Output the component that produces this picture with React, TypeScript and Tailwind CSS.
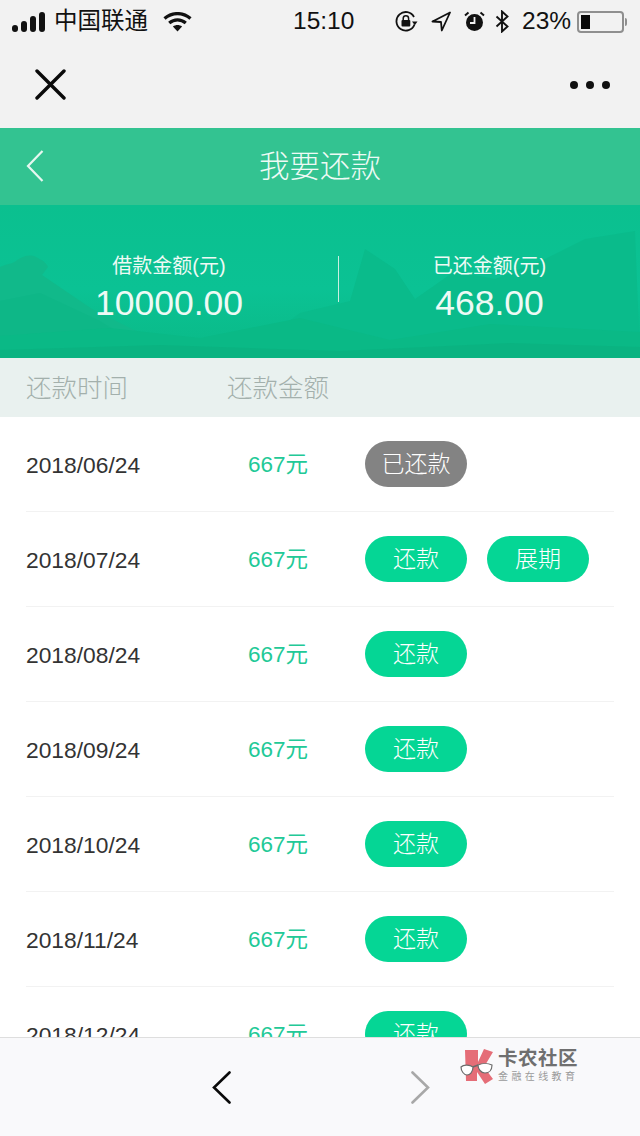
import React from 'react';

const FONT = "font-['Liberation_Sans','Noto_Sans_CJK_SC',sans-serif]";

interface Repayment {
    date: string;
    paid?: boolean;
    extend?: boolean;
}

const rows: Repayment[] = [
    { date: '2018/06/24', paid: true },
    { date: '2018/07/24', extend: true },
    { date: '2018/08/24' },
    { date: '2018/09/24' },
    { date: '2018/10/24' },
    { date: '2018/11/24' },
    { date: '2018/12/24' },
];

const PillButton: React.FC<{ label: string; gray?: boolean }> = ({ label, gray }) => (
    <div
        className={`flex h-[46px] w-[102px] items-center justify-center rounded-full pt-[1px] text-[23px] font-light text-white ${
            gray ? 'bg-[#838383]' : 'bg-[#05d695]'
        }`}
    >
        {label}
    </div>
);

const StatusBar: React.FC = () => (
    <div className="flex h-[42px] items-center whitespace-nowrap pt-[1px] text-[#111]">
        {/* signal */}
        <svg className="ml-[12px]" width="33" height="20" viewBox="0 0 33 20" fill="#111">
            <rect x="0" y="13" width="6" height="7" rx="3" />
            <rect x="9" y="9" width="6" height="11" rx="3" />
            <rect x="18" y="4" width="6" height="16" rx="3" />
            <rect x="27" y="0" width="6" height="20" rx="3" />
        </svg>
        <span className="ml-[9px] w-[95px] text-[23.500px] leading-none">中国联通</span>
        {/* wifi */}
        <svg className="ml-[14px]" width="29" height="20" viewBox="0 0 29 20" fill="none" stroke="#111" strokeWidth="3.2">
            <path d="M1.5 6.500c7.500-6.600 18.500-6.600 26 0" />
            <path d="M6.200 11c5-4.300 11.600-4.300 16.600 0" />
            <path d="M14.500 19.500l-4.600-5c2.800-2 6.400-2 9.200 0z" fill="#111" stroke="none" />
        </svg>
        <span className="ml-[101px] w-[61px] text-[24.500px] font-medium leading-none">15:10</span>
        {/* rotation lock */}
        <svg className="ml-[41px]" width="23" height="22" viewBox="0 0 23 22" fill="none" stroke="#111" strokeWidth="1.800">
            <path d="M19.500 13.500A9.300 9.300 0 1 1 19 6" />
            <path d="M17 10.500h5.500l-2.700 3.700z" fill="#111" stroke="none" />
            <path d="M8.200 9V7.400a2.700 2.700 0 0 1 5.400 0V9" strokeWidth="1.500" />
            <rect x="6.500" y="9" width="8.800" height="6.500" rx="1" fill="#111" stroke="none" />
        </svg>
        {/* location */}
        <svg className="ml-[13px]" width="20" height="21" viewBox="0 0 20 21" fill="none" stroke="#111" strokeWidth="1.800" strokeLinejoin="round">
            <path d="M19 1.500L1.500 10.500l8.500 .5 .8 8.500z" />
        </svg>
        {/* alarm */}
        <svg className="ml-[13px]" width="21" height="21" viewBox="0 0 21 21">
            <circle cx="10.500" cy="11.500" r="8.500" fill="#111" />
            <path d="M10.500 6v6H6" fill="none" stroke="#f2f2f2" strokeWidth="1.800" />
            <path d="M1 4.500L4.500 1.500M20 4.500L16.500 1.500" stroke="#111" strokeWidth="2" />
        </svg>
        {/* bluetooth */}
        <svg className="ml-[10px]" width="15" height="23" viewBox="0 0 15 23" fill="none" stroke="#111" strokeWidth="1.900">
            <path d="M1.500 6.500l11 10-5.500 5V1.500l5.500 5-11 10" />
        </svg>
        <span className="ml-[12px] w-[49px] text-[24.500px] leading-none">23%</span>
        {/* battery */}
        <div className="ml-[6px] flex h-[22px] w-[47px] items-center rounded-[4px] border-2 border-[#8f8f8f] px-[2px]">
            <div className="h-[14px] w-[9px] bg-[#0a0a0a]" />
        </div>
        <div className="ml-[1px] h-[8px] w-[2px] rounded-r-full bg-[#8f8f8f]" />
    </div>
);

const Mountains: React.FC = () => (
    <svg className="absolute inset-0 h-full w-full" viewBox="0 0 640 153" preserveAspectRatio="none">
        <path d="M0 62c6-3 12-3 16-6s12-8 20-4 10 6 12 10l-6 8 50 34 40 20 70 29H0z" fill="#11b98a" />
        <path d="M0 96l40-8 60 28 60 37H0z" fill="#0eb585" opacity=".6" />
        <path d="M240 153l60-45 50-12 15-52 30 20 20 30 40-28 40 8 50-20 40-20 50-8 5 127z" fill="#0abb8b" />
        <path d="M0 153v-22l110-8 90 10 100-20 90 22 100-16 150 8v26z" fill="#0ab986" />
        <path d="M0 153v-8l160-5 180 6 170-8 130 4v11z" fill="#0ab07f" opacity=".7" />
    </svg>
);

const Watermark: React.FC = () => (
    <div className="absolute left-[460px] top-[1047px] flex items-start">
        <svg width="36" height="38" viewBox="0 0 36 38">
            <path d="M5 3h13v12L24 2l9 3-9 15 9 12-8 5-8-12v9H6z" fill="#e56d77" />
            <path d="M1 20c3-3 9-2 12 0 0 5-3 8-6 8s-6-4-6-8z" fill="#fff" stroke="#6b6b6b" strokeWidth="1.200" />
            <path d="M18 18c4-2 10-2 14 0 0 5-3 8-7 8s-7-4-7-8z" fill="#fff" stroke="#6b6b6b" strokeWidth="1.200" />
            <path d="M13 20c2-1 3-1 5-2" fill="none" stroke="#6b6b6b" strokeWidth="1.500" />
        </svg>
        <div className="ml-[2px] flex flex-col">
            <span className="text-[19.500px] font-bold leading-[22px] tracking-[0.500px] text-[#6f6f6f]">卡农社区</span>
            <span className="mt-[2px] text-[10px] leading-[12px] tracking-[3.400px] text-[#9a9a9a]">金融在线教育</span>
        </div>
    </div>
);

const App: React.FC = () => {
    return (
        <div className={`${FONT} relative flex h-[1136px] w-[640px] flex-col overflow-hidden bg-white`}>
            {/* browser chrome */}
            <div className="h-[128px] bg-[#f2f2f2]">
                <StatusBar />
                <div className="flex h-[85px] items-center justify-between pl-[35px] pr-[30px]">
                    <svg width="31" height="31" viewBox="0 0 31 31" stroke="#0a0a0a" strokeWidth="3.400" strokeLinecap="round">
                        <path d="M2 2l27 27M29 2L2 29" />
                    </svg>
                    <div className="flex gap-[8px]">
                        <div className="h-[8px] w-[8px] rounded-full bg-[#111]" />
                        <div className="h-[8px] w-[8px] rounded-full bg-[#111]" />
                        <div className="h-[8px] w-[8px] rounded-full bg-[#111]" />
                    </div>
                </div>
            </div>

            {/* title */}
            <div className="relative flex h-[77px] items-center justify-center bg-[#33c391]">
                <svg className="absolute left-[26px] top-[22px]" width="18" height="32" viewBox="0 0 18 32" fill="none" stroke="#e6f7f0" strokeWidth="2.200">
                    <path d="M16.500 1L2 16l14.500 15" />
                </svg>
                <span className="text-[30.500px] font-light leading-none text-[#eefaf5]">我要还款</span>
            </div>

            {/* summary */}
            <div className="relative flex h-[153px] items-center bg-[linear-gradient(180deg,#0bc08f_0%,#0bc294_55%,#0ab986_100%)] text-[#eefaf5]">
                <Mountains />
                <div className="relative flex w-[338px] flex-col items-center pt-[10px]">
                    <span className="pt-[2px] text-[20px] leading-[26px]">借款金额(元)</span>
                    <span className="mt-[4px] text-[35.500px] leading-[40px]">10000.00</span>
                </div>
                <div className="relative mt-[-6px] h-[46px] w-px bg-[#c9efe2]" />
                <div className="relative flex w-[301px] flex-col items-center pt-[10px]">
                    <span className="pt-[2px] text-[20px] leading-[26px]">已还金额(元)</span>
                    <span className="mt-[4px] text-[35.500px] leading-[40px]">468.00</span>
                </div>
            </div>

            {/* table head */}
            <div className="flex h-[59px] items-center bg-[#e9f1ef] pl-[26px] pt-[2px] text-[25.500px] font-light text-[#a3b0ac]">
                <span className="w-[201px]">还款时间</span>
                <span>还款金额</span>
            </div>

            {/* rows */}
            <div className="min-h-0 flex-1 overflow-hidden px-[26px]">
                {rows.map((row) => (
                    <div key={row.date} className="flex h-[95px] shrink-0 items-center border-b border-[#f2f2f2] pb-[1px]">
                        <span className="w-[222px] pt-[3px] text-[22.800px] text-[#333]">{row.date}</span>
                        <span className="w-[117px] pt-[3px] text-[22.500px] text-[#22c997]">667元</span>
                        <div className="flex gap-[20px]">
                            {row.paid ? <PillButton label="已还款" gray /> : <PillButton label="还款" />}
                            {row.extend && <PillButton label="展期" />}
                        </div>
                    </div>
                ))}
            </div>

            {/* bottom toolbar */}
            <div className="flex h-[99px] shrink-0 items-start border-t border-[#dedede] bg-[#f9f9fb] pl-[212px] pt-[33px]">
                <svg width="19" height="33" viewBox="0 0 19 33" fill="none" stroke="#0a0a0a" strokeWidth="2.600" strokeLinecap="round">
                    <path d="M17.500 1.500L2 16.500l15.500 15" />
                </svg>
                <svg className="ml-[180px]" width="19" height="33" viewBox="0 0 19 33" fill="none" stroke="#a8a8a8" strokeWidth="2.600" strokeLinecap="round">
                    <path d="M1.500 1.500L17 16.500l-15.500 15" />
                </svg>
            </div>

            <Watermark />
        </div>
    );
};

export default App;
